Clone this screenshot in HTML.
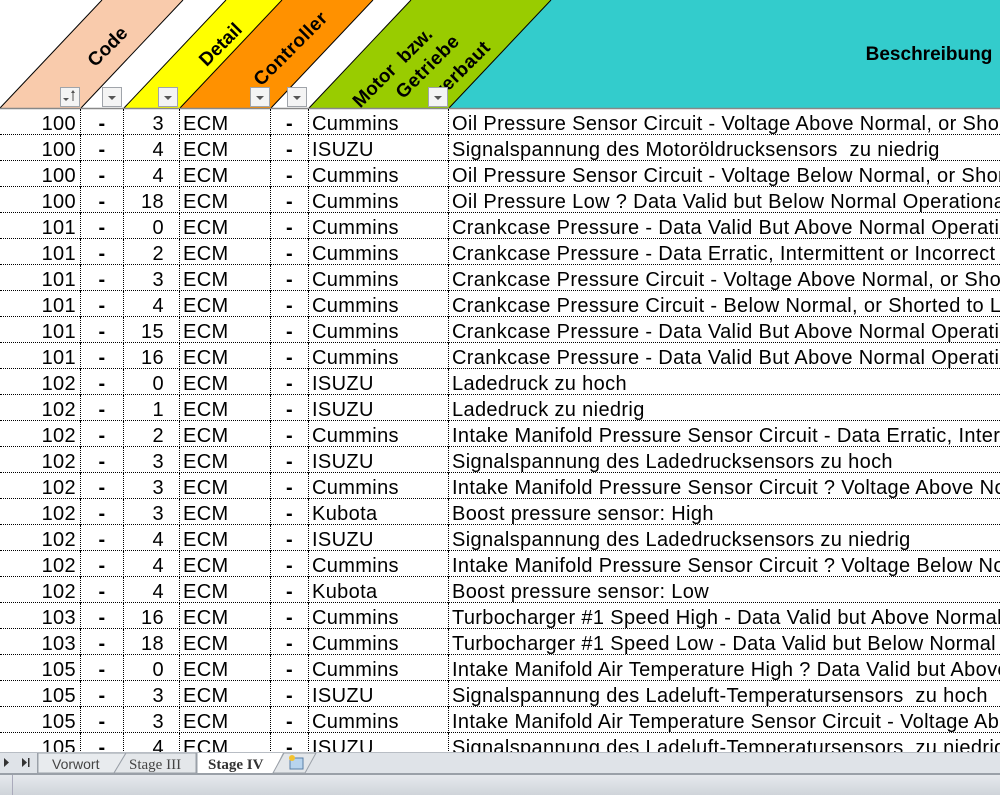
<!DOCTYPE html>
<html><head><meta charset="utf-8"><style>
*{margin:0;padding:0;box-sizing:border-box}
body{width:1000px;height:795px;overflow:hidden;background:#fff;font-family:"Liberation Sans",Arial,sans-serif;position:relative}
#hdr{position:absolute;left:0;top:0}
.row{position:absolute;left:0;height:26px;width:1000px;border-bottom:1px dotted #000;font-size:20px;line-height:26px;color:#000;letter-spacing:0.35px}
.row div{position:absolute;top:0;height:26px;padding-top:2px;border-right:1px dotted #000;white-space:pre;overflow:hidden}
.c1{left:0;width:81px;text-align:right;padding-right:4px}
.c2{left:81px;width:43px;text-align:center;font-weight:bold}
.c3{left:124px;width:56px;text-align:right;padding-right:15px}
.c4{left:180px;width:91px;padding-left:3px}
.c5{left:271px;width:38px;text-align:center;font-weight:bold}
.c6{left:309px;width:140px;padding-left:3px}
.c7{left:449px;width:560px;padding-left:3px;border-right:none!important}
#tabs{position:absolute;left:0;top:752px;width:1000px;height:21px;background:#dfe3e8;border-top:1px solid #b8bdc4;font-size:15px}
#status{position:absolute;left:0;top:773px;width:1000px;height:22px;background:linear-gradient(#e6e9ed,#cfd4da);border-top:2px solid #9aa0a8}
</style></head><body>
<svg id="hdr" width="1000" height="110" xmlns="http://www.w3.org/2000/svg">
<rect x="0" y="0" width="1000" height="110" fill="#fff"/>
<polygon points="0,108 81,108 183,0 102,0" fill="#f9cbac"/>
<polygon points="124,108 180,108 282,0 226,0" fill="#ffff00"/>
<polygon points="180,108 271,108 373,0 282,0" fill="#ff9100"/>
<polygon points="309,108 449,108 551,0 411,0" fill="#99cc00"/>
<polygon points="449,108 1000,108 1000,0 551,0" fill="#33cccc"/>
<g stroke="#000" stroke-width="1">
<line x1="0" y1="108" x2="102" y2="0"/><line x1="81" y1="108" x2="183" y2="0"/>
<line x1="124" y1="108" x2="226" y2="0"/><line x1="180" y1="108" x2="282" y2="0"/>
<line x1="271" y1="108" x2="373" y2="0"/><line x1="309" y1="108" x2="411" y2="0"/>
<line x1="449" y1="108" x2="551" y2="0"/>
</g>
<line x1="0" y1="108.5" x2="1000" y2="108.5" stroke="#888" stroke-width="1.5"/>
<g font-family="Liberation Sans, Arial, sans-serif" font-weight="bold" font-size="19" fill="#000" text-anchor="middle">
<text transform="translate(107,46) rotate(-45)" dy="7">Code</text>
<text transform="translate(220,44) rotate(-45)" dy="7">Detail</text>
<text transform="translate(290,48) rotate(-45)" dy="7" letter-spacing="0.5">Controller</text>
<text transform="translate(392,67) rotate(-45)" dy="7" xml:space="preserve">Motor  bzw.</text>
<text transform="translate(427,66) rotate(-45)" dy="7" letter-spacing="0.5">Getriebe</text>
<text transform="translate(461,69) rotate(-45)" dy="7" letter-spacing="0.5">verbaut</text>
<text x="929" y="60" text-anchor="middle">Beschreibung</text>
</g>
<g fill="#f4f4f4" stroke="#a0a4aa">
<rect x="60.5" y="87.5" width="19" height="19"/><rect x="102.5" y="87.5" width="19" height="19"/>
<rect x="158.5" y="87.5" width="19" height="19"/><rect x="250.5" y="87.5" width="19" height="19"/>
<rect x="287.5" y="87.5" width="19" height="19"/><rect x="428.5" y="87.5" width="19" height="19"/>
</g>
<g fill="#555">
<polygon points="63,98 69,98 66,101"/><polygon points="108,96 116,96 112,100"/>
<polygon points="164,96 172,96 168,100"/><polygon points="256,96 264,96 260,100"/>
<polygon points="293,96 301,96 297,100"/><polygon points="434,96 442,96 438,100"/>
</g>
<line x1="73" y1="92" x2="73" y2="101" stroke="#555"/><polygon points="71,93 75,93 73,90" fill="#555"/>
</svg>
<div class="row" style="top:109px"><div class="c1">100</div><div class="c2">-</div><div class="c3">3</div><div class="c4">ECM</div><div class="c5">-</div><div class="c6">Cummins</div><div class="c7">Oil Pressure Sensor Circuit - Voltage Above Normal, or Shorted to High Source</div></div>
<div class="row" style="top:135px"><div class="c1">100</div><div class="c2">-</div><div class="c3">4</div><div class="c4">ECM</div><div class="c5">-</div><div class="c6">ISUZU</div><div class="c7">Signalspannung des Motoröldrucksensors  zu niedrig</div></div>
<div class="row" style="top:161px"><div class="c1">100</div><div class="c2">-</div><div class="c3">4</div><div class="c4">ECM</div><div class="c5">-</div><div class="c6">Cummins</div><div class="c7">Oil Pressure Sensor Circuit - Voltage Below Normal, or Shorted to Low Source</div></div>
<div class="row" style="top:187px"><div class="c1">100</div><div class="c2">-</div><div class="c3">18</div><div class="c4">ECM</div><div class="c5">-</div><div class="c6">Cummins</div><div class="c7">Oil Pressure Low ? Data Valid but Below Normal Operational Range</div></div>
<div class="row" style="top:213px"><div class="c1">101</div><div class="c2">-</div><div class="c3">0</div><div class="c4">ECM</div><div class="c5">-</div><div class="c6">Cummins</div><div class="c7">Crankcase Pressure - Data Valid But Above Normal Operational Range</div></div>
<div class="row" style="top:239px"><div class="c1">101</div><div class="c2">-</div><div class="c3">2</div><div class="c4">ECM</div><div class="c5">-</div><div class="c6">Cummins</div><div class="c7">Crankcase Pressure - Data Erratic, Intermittent or Incorrect</div></div>
<div class="row" style="top:265px"><div class="c1">101</div><div class="c2">-</div><div class="c3">3</div><div class="c4">ECM</div><div class="c5">-</div><div class="c6">Cummins</div><div class="c7">Crankcase Pressure Circuit - Voltage Above Normal, or Shorted to High</div></div>
<div class="row" style="top:291px"><div class="c1">101</div><div class="c2">-</div><div class="c3">4</div><div class="c4">ECM</div><div class="c5">-</div><div class="c6">Cummins</div><div class="c7">Crankcase Pressure Circuit - Below Normal, or Shorted to Low Source</div></div>
<div class="row" style="top:317px"><div class="c1">101</div><div class="c2">-</div><div class="c3">15</div><div class="c4">ECM</div><div class="c5">-</div><div class="c6">Cummins</div><div class="c7">Crankcase Pressure - Data Valid But Above Normal Operational Range</div></div>
<div class="row" style="top:343px"><div class="c1">101</div><div class="c2">-</div><div class="c3">16</div><div class="c4">ECM</div><div class="c5">-</div><div class="c6">Cummins</div><div class="c7">Crankcase Pressure - Data Valid But Above Normal Operational Range</div></div>
<div class="row" style="top:369px"><div class="c1">102</div><div class="c2">-</div><div class="c3">0</div><div class="c4">ECM</div><div class="c5">-</div><div class="c6">ISUZU</div><div class="c7">Ladedruck zu hoch</div></div>
<div class="row" style="top:395px"><div class="c1">102</div><div class="c2">-</div><div class="c3">1</div><div class="c4">ECM</div><div class="c5">-</div><div class="c6">ISUZU</div><div class="c7">Ladedruck zu niedrig</div></div>
<div class="row" style="top:421px"><div class="c1">102</div><div class="c2">-</div><div class="c3">2</div><div class="c4">ECM</div><div class="c5">-</div><div class="c6">Cummins</div><div class="c7">Intake Manifold Pressure Sensor Circuit - Data Erratic, Intermittent</div></div>
<div class="row" style="top:447px"><div class="c1">102</div><div class="c2">-</div><div class="c3">3</div><div class="c4">ECM</div><div class="c5">-</div><div class="c6">ISUZU</div><div class="c7">Signalspannung des Ladedrucksensors zu hoch</div></div>
<div class="row" style="top:473px"><div class="c1">102</div><div class="c2">-</div><div class="c3">3</div><div class="c4">ECM</div><div class="c5">-</div><div class="c6">Cummins</div><div class="c7">Intake Manifold Pressure Sensor Circuit ? Voltage Above Normal</div></div>
<div class="row" style="top:499px"><div class="c1">102</div><div class="c2">-</div><div class="c3">3</div><div class="c4">ECM</div><div class="c5">-</div><div class="c6">Kubota</div><div class="c7">Boost pressure sensor: High</div></div>
<div class="row" style="top:525px"><div class="c1">102</div><div class="c2">-</div><div class="c3">4</div><div class="c4">ECM</div><div class="c5">-</div><div class="c6">ISUZU</div><div class="c7">Signalspannung des Ladedrucksensors zu niedrig</div></div>
<div class="row" style="top:551px"><div class="c1">102</div><div class="c2">-</div><div class="c3">4</div><div class="c4">ECM</div><div class="c5">-</div><div class="c6">Cummins</div><div class="c7">Intake Manifold Pressure Sensor Circuit ? Voltage Below Normal</div></div>
<div class="row" style="top:577px"><div class="c1">102</div><div class="c2">-</div><div class="c3">4</div><div class="c4">ECM</div><div class="c5">-</div><div class="c6">Kubota</div><div class="c7">Boost pressure sensor: Low</div></div>
<div class="row" style="top:603px"><div class="c1">103</div><div class="c2">-</div><div class="c3">16</div><div class="c4">ECM</div><div class="c5">-</div><div class="c6">Cummins</div><div class="c7">Turbocharger #1 Speed High - Data Valid but Above Normal Operational</div></div>
<div class="row" style="top:629px"><div class="c1">103</div><div class="c2">-</div><div class="c3">18</div><div class="c4">ECM</div><div class="c5">-</div><div class="c6">Cummins</div><div class="c7">Turbocharger #1 Speed Low - Data Valid but Below Normal Operational</div></div>
<div class="row" style="top:655px"><div class="c1">105</div><div class="c2">-</div><div class="c3">0</div><div class="c4">ECM</div><div class="c5">-</div><div class="c6">Cummins</div><div class="c7">Intake Manifold Air Temperature High ? Data Valid but Above Normal</div></div>
<div class="row" style="top:681px"><div class="c1">105</div><div class="c2">-</div><div class="c3">3</div><div class="c4">ECM</div><div class="c5">-</div><div class="c6">ISUZU</div><div class="c7">Signalspannung des Ladeluft-Temperatursensors  zu hoch</div></div>
<div class="row" style="top:707px"><div class="c1">105</div><div class="c2">-</div><div class="c3">3</div><div class="c4">ECM</div><div class="c5">-</div><div class="c6">Cummins</div><div class="c7">Intake Manifold Air Temperature Sensor Circuit - Voltage Above Normal</div></div>
<div class="row" style="top:733px"><div class="c1">105</div><div class="c2">-</div><div class="c3">4</div><div class="c4">ECM</div><div class="c5">-</div><div class="c6">ISUZU</div><div class="c7">Signalspannung des Ladeluft-Temperatursensors  zu niedrig</div></div>
<div id="tabs">
<svg width="1000" height="21" style="position:absolute;left:0;top:0">
<polygon points="4,5 4,14 9,9.5" fill="#333"/><polygon points="22,5 22,14 27,9.5" fill="#333"/><rect x="28" y="5" width="1.5" height="9" fill="#333"/>
<line x1="37.5" y1="0" x2="37.5" y2="21" stroke="#9aa0a8"/>
<polygon points="38,0 38,20 114,20 126,0" fill="#e8ebee" stroke="#9aa0a8"/>
<polygon points="114,20 126,0 196,0 196,20" fill="#e4e7ea" stroke="#9aa0a8"/>
<polygon points="197,-1 197,21 273,21 284,-1" fill="#fff" stroke="#9aa0a8"/>
<polygon points="273,20 284,0 316,0 305,20" fill="#e4e7ea" stroke="#9aa0a8"/>
<rect x="290" y="5" width="13" height="11" fill="#b8d4ee" stroke="#5a7fa6"/>
<circle cx="292" cy="5" r="3" fill="#f3c230"/>
<text x="52" y="16" font-family="Liberation Sans, sans-serif" font-size="14" fill="#444">Vorwort</text>
<text x="129" y="16" font-family="Liberation Serif, serif" font-size="15" fill="#444">Stage III</text>
<text x="208" y="16" font-family="Liberation Serif, serif" font-size="15" font-weight="bold" fill="#333">Stage IV</text>
</svg>
</div>
<div id="status"><div style="position:absolute;left:12px;top:0;width:1px;height:20px;background:#aab"></div></div>
</body></html>
